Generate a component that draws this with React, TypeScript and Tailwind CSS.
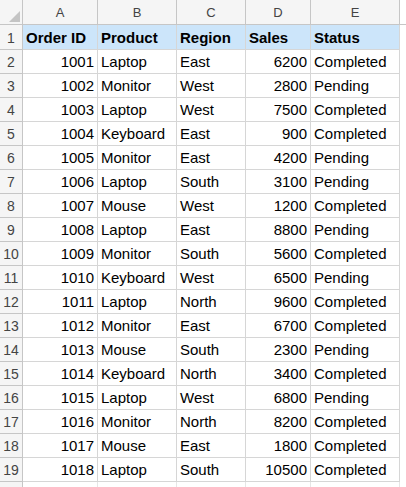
import React from 'react'

const COLS = ['A', 'B', 'C', 'D', 'E']

const ROWS: [number, string, string, number, string][] = [
  [1001, 'Laptop', 'East', 6200, 'Completed'],
  [1002, 'Monitor', 'West', 2800, 'Pending'],
  [1003, 'Laptop', 'West', 7500, 'Completed'],
  [1004, 'Keyboard', 'East', 900, 'Completed'],
  [1005, 'Monitor', 'East', 4200, 'Pending'],
  [1006, 'Laptop', 'South', 3100, 'Pending'],
  [1007, 'Mouse', 'West', 1200, 'Completed'],
  [1008, 'Laptop', 'East', 8800, 'Pending'],
  [1009, 'Monitor', 'South', 5600, 'Completed'],
  [1010, 'Keyboard', 'West', 6500, 'Pending'],
  [1011, 'Laptop', 'North', 9600, 'Completed'],
  [1012, 'Monitor', 'East', 6700, 'Completed'],
  [1013, 'Mouse', 'South', 2300, 'Pending'],
  [1014, 'Keyboard', 'North', 3400, 'Completed'],
  [1015, 'Laptop', 'West', 6800, 'Pending'],
  [1016, 'Monitor', 'North', 8200, 'Completed'],
  [1017, 'Mouse', 'East', 1800, 'Completed'],
  [1018, 'Laptop', 'South', 10500, 'Completed'],
]

const GRID = 'grid grid-cols-[23px_75px_79px_69px_65px_89px_1fr]'
const cell = 'border-r border-b border-[#d6d6d6] px-[3px] pt-[2px] flex items-center whitespace-nowrap overflow-hidden'
const rowHead = 'border-r border-b border-[#c6c6c6] bg-[#f5f5f5] text-[14px] text-[#444] pt-[2px] flex items-center justify-center'

export default function App() {
  return (
    <div className="w-[406px] h-[487px] overflow-hidden bg-white text-[15px] text-black" style={{ fontFamily: '"Liberation Sans", Arial, sans-serif' }}>
      {/* column letters */}
      <div className={`${GRID} h-[25px] bg-[#f5f5f5]`}>
        <div className="border-r border-b border-[#c6c6c6] relative">
          <svg className="absolute right-[2px] bottom-[2px]" width="11" height="11" viewBox="0 0 11 11">
            <polygon points="11,0 11,11 0,11" fill="#c4c4c4" />
          </svg>
        </div>
        {COLS.map((c) => (
          <div key={c} className="border-r border-b border-[#c6c6c6] text-[13px] text-[#444] pt-[2px] flex items-center justify-center">{c}</div>
        ))}
        <div className="bg-white border-b border-[#c6c6c6]" />
      </div>

      {/* header row */}
      <div className={`${GRID} h-[25px]`}>
        <div className={rowHead}>1</div>
        {['Order ID', 'Product', 'Region', 'Sales', 'Status'].map((h) => (
          <div key={h} className={`${cell} bg-[#cce5fa] font-bold`}>{h}</div>
        ))}
        <div />
      </div>

      {ROWS.map((r, i) => (
        <div key={r[0]} className={`${GRID} h-[24px]`}>
          <div className={rowHead}>{i + 2}</div>
          <div className={`${cell} justify-end`}>{r[0]}</div>
          <div className={cell}>{r[1]}</div>
          <div className={cell}>{r[2]}</div>
          <div className={`${cell} justify-end`}>{r[3]}</div>
          <div className={cell}>{r[4]}</div>
          <div />
        </div>
      ))}

      <div className={`${GRID} h-[24px]`}>
        <div className="border-r border-[#c6c6c6] bg-[#f5f5f5]" />
        <div className="border-r border-[#e6e6e6]" />
        <div className="border-r border-[#e6e6e6]" />
        <div className="border-r border-[#e6e6e6]" />
        <div className="border-r border-[#e6e6e6]" />
        <div className="border-r border-[#e6e6e6]" />
        <div />
      </div>
    </div>
  )
}
